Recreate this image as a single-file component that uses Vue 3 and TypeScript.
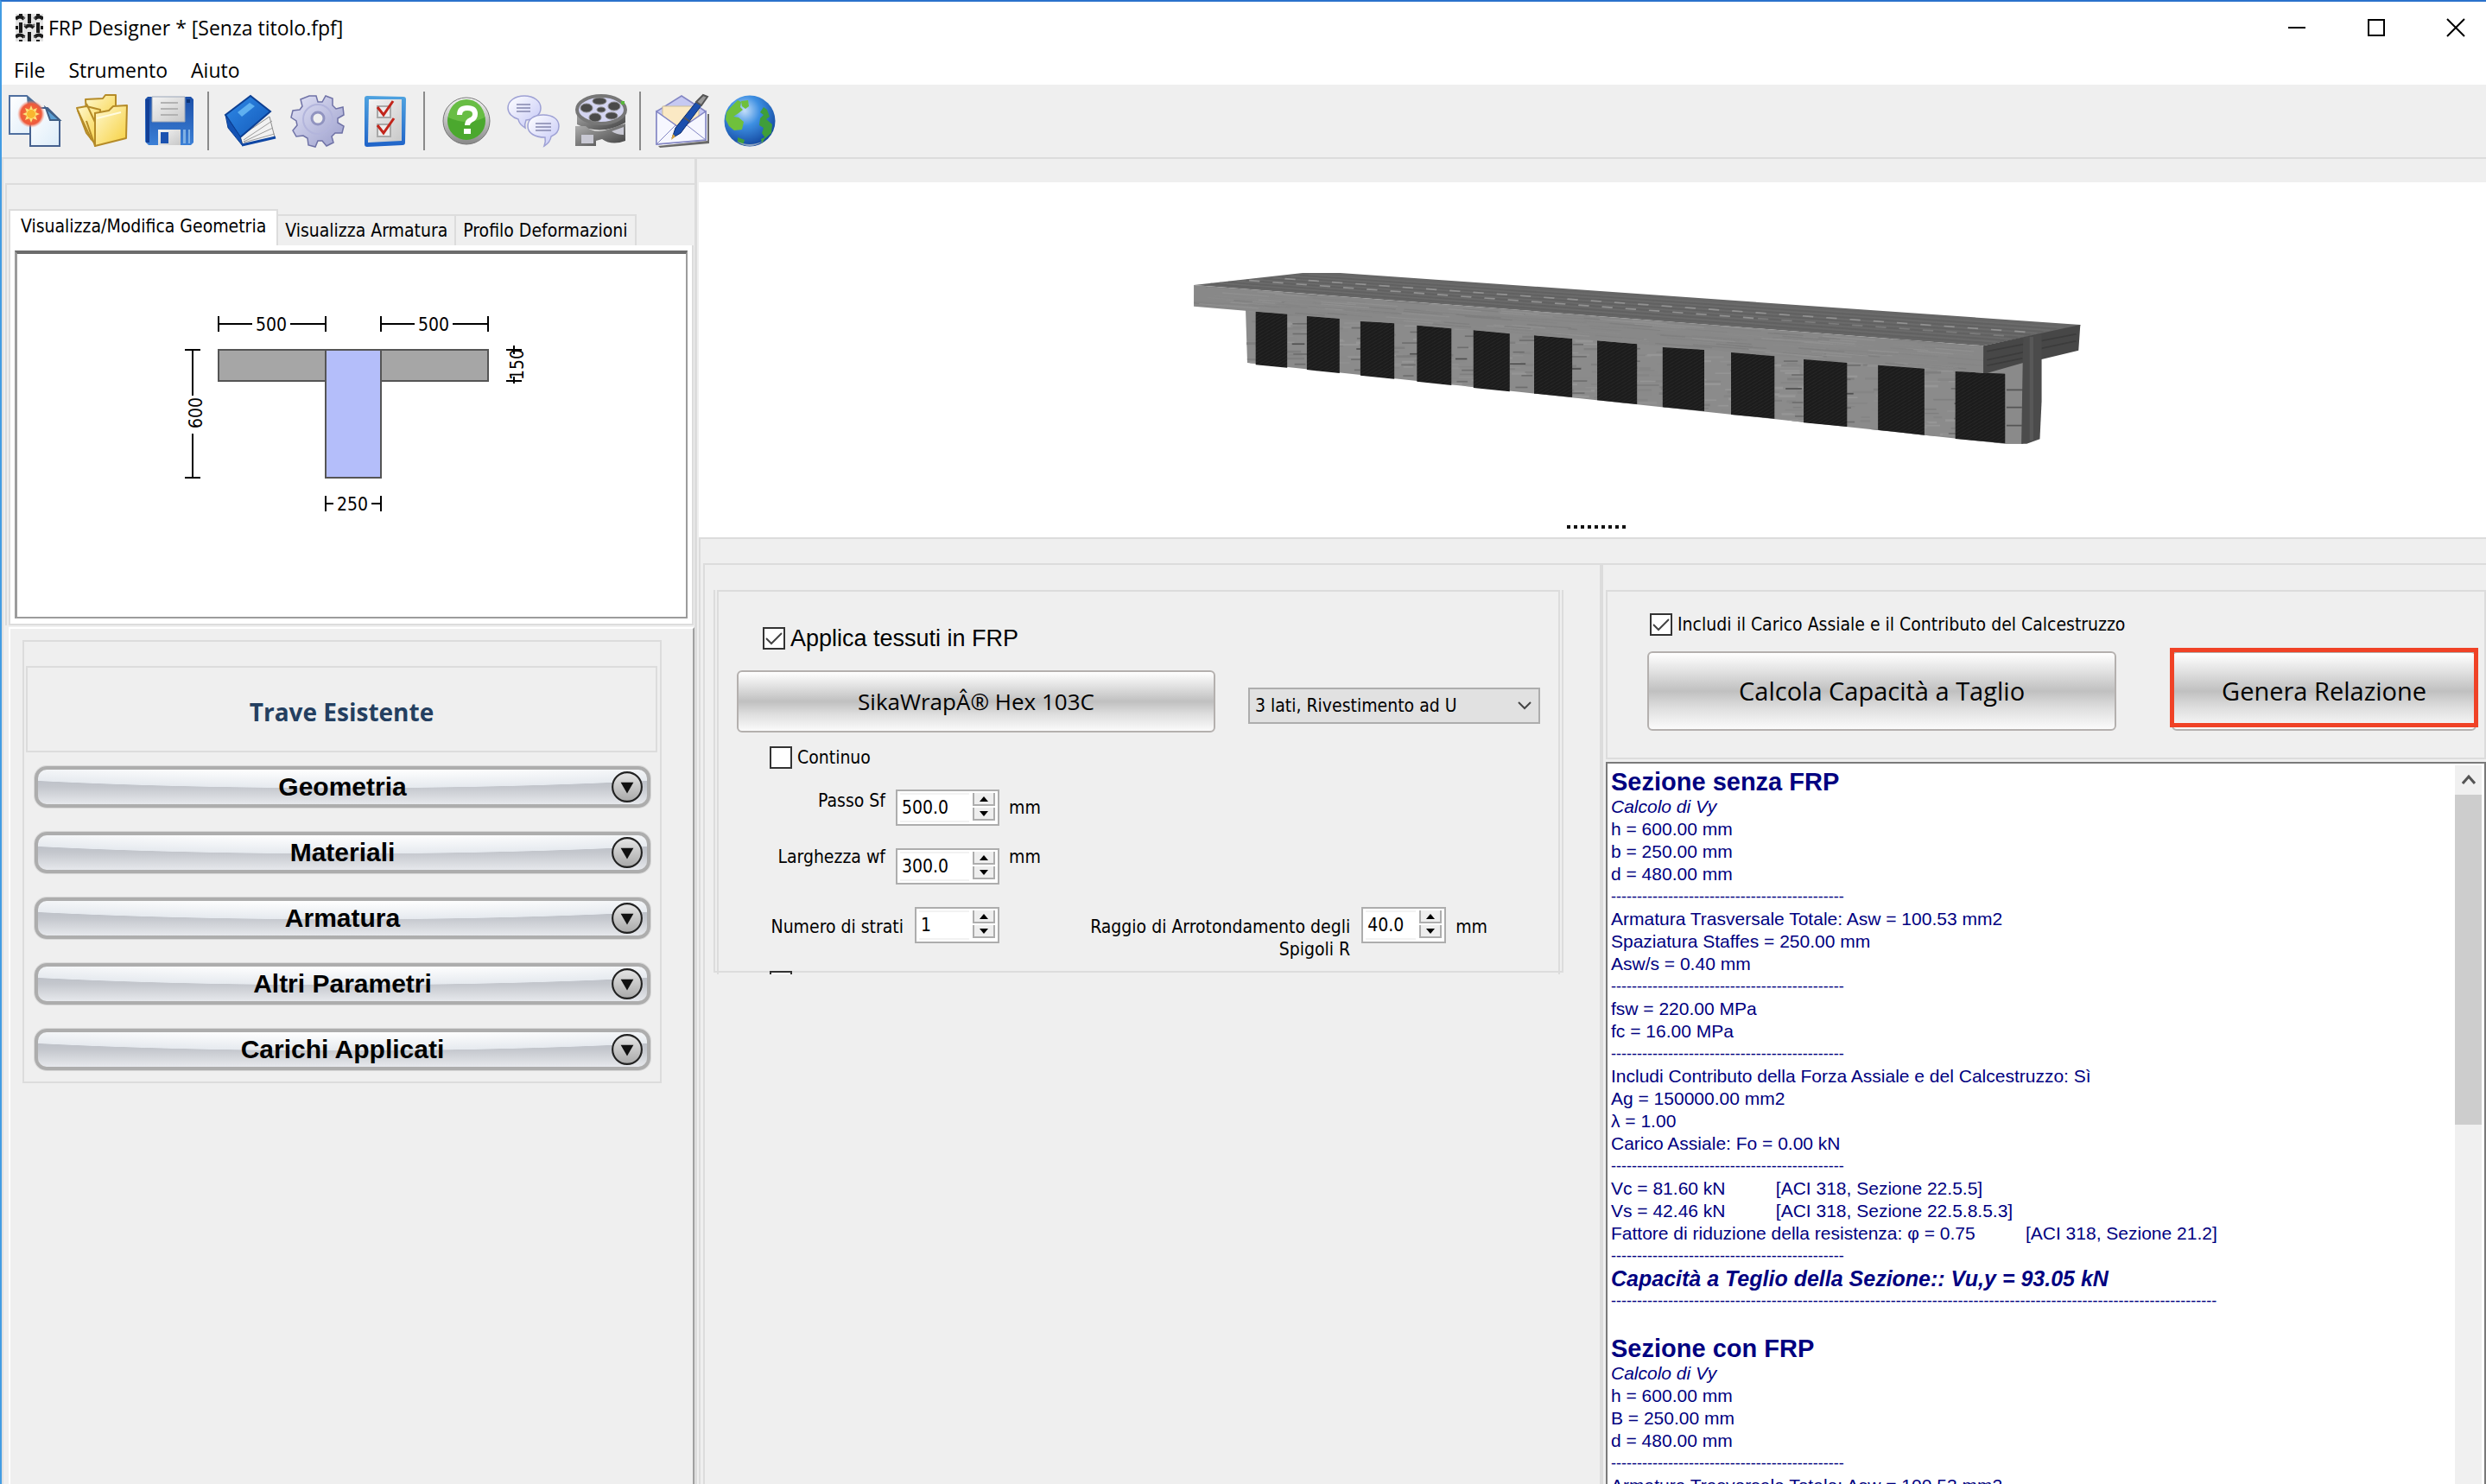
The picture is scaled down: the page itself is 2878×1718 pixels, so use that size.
<script setup lang="ts">
import { ref } from 'vue'

const menus = ['File', 'Strumento', 'Aiuto']
const tabs = ['Visualizza/Modifica Geometria', 'Visualizza Armatura', 'Profilo Deformazioni']
const activeTab = ref(0)
const sections = ['Geometria', 'Materiali', 'Armatura', 'Altri Parametri', 'Carichi Applicati']

const applyFabric = ref(true)
const continuous = ref(false)
const extra = ref(false)
const includeAxial = ref(true)
const wrap = ref('3 lati, Rivestimento ad U')
const spacing = ref('500.0')
const width = ref('300.0')
const layers = ref('1')
const radius = ref('40.0')

type Line = { kind: 'head' | 'ital' | 'text' | 'dash' | 'result'; text: string }
const short: Line = { kind: 'dash', text: '-'.repeat(45) }
const t = (text: string): Line => ({ kind: 'text', text })
const gap = ' '.repeat(10)
const report: Line[] = [
  { kind: 'head', text: 'Sezione senza FRP' },
  { kind: 'ital', text: 'Calcolo di Vy' },
  t('h = 600.00 mm'),
  t('b = 250.00 mm'),
  t('d = 480.00 mm'),
  short,
  t('Armatura Trasversale Totale: Asw = 100.53 mm2'),
  t('Spaziatura Staffes = 250.00 mm'),
  t('Asw/s = 0.40 mm'),
  short,
  t('fsw = 220.00 MPa'),
  t('fc = 16.00 MPa'),
  short,
  t('Includi Contributo della Forza Assiale e del Calcestruzzo: Sì'),
  t('Ag = 150000.00 mm2'),
  t('λ = 1.00'),
  t('Carico Assiale: Fo = 0.00 kN'),
  short,
  t('Vc = 81.60 kN' + gap + '[ACI 318, Sezione 22.5.5]'),
  t('Vs = 42.46 kN' + gap + '[ACI 318, Sezione 22.5.8.5.3]'),
  t('Fattore di riduzione della resistenza: φ = 0.75' + gap + '[ACI 318, Sezione 21.2]'),
  short,
  { kind: 'result', text: 'Capacità a Teglio della Sezione:: Vu,y = 93.05 kN' },
  { kind: 'dash', text: '-'.repeat(117) },
  t(' '),
  { kind: 'head', text: 'Sezione con FRP' },
  { kind: 'ital', text: 'Calcolo di Vy' },
  t('h = 600.00 mm'),
  t('B = 250.00 mm'),
  t('d = 480.00 mm'),
  short,
  t('Armatura Trasversale Totale: Asw = 100.53 mm2'),
]

// FRP strips wrapped round the web: left, right, top-left, top-right, bottom-left, bottom-right
const strips = [
  [136, 189, 212, 219, 397, 407],
  [222, 277, 228, 235, 414, 426],
  [312, 369, 246, 252, 434, 446],
  [407, 465, 260, 271, 455, 468],
  [502, 563, 277, 289, 477, 490],
  [604, 668, 295, 306, 497, 510],
  [710, 777, 313, 325, 520, 534],
  [820, 890, 336, 345, 544, 558],
  [935, 1008, 354, 367, 570, 584],
  [1057, 1130, 378, 390, 598, 612],
  [1182, 1260, 398, 410, 623, 641],
  [1312, 1396, 420, 428, 654, 670],
].map(([l, r, tl, tr, bl, br]) => `${l},${tl} ${r},${tr} ${r},${br} ${l},${bl}`)

// Grain of the concrete faces, from a small repeatable generator
let seed = 7
const rnd = () => {
  seed = (seed * 16807) % 2147483647
  return seed / 2147483647
}
const tone = ['#858585', '#909090', '#8a8a8a', '#7f7f7f', '#969696']
const webGrain = Array.from({ length: 420 }, () => {
  const x = 119 + rnd() * 1300
  const f = (x - 119) / 1307
  const y = 208 + f * 200 + rnd() * (182 + f * 90)
  return { x, y, w: 14 + rnd() * 26, h: 4 + rnd() * 5, c: tone[Math.floor(rnd() * 5)] }
})
const cracks = Array.from({ length: 70 }, (_, i) => {
  const x = 195 + Math.floor(i / 5) * 92
  const f = (x - 119) / 1307
  return { x: x + rnd() * 20, y: 240 + f * 205 + (i % 5) * (34 + f * 20), w: 16 + rnd() * 14, c: i % 5 === 2 ? '#505050' : '#6e6e6e' }
})
const faceGrain = Array.from({ length: 200 }, () => {
  const x = 20 + rnd() * 1290
  const f = (x - 32) / 1327
  const y = 122 + f * 211 + rnd() * (66 + f * 22)
  return { x, y, w: 30 + rnd() * 70, c: tone[Math.floor(rnd() * 4)] }
})
const topGrain = Array.from({ length: 12 }, (_, i) => ({
  x1: 60 + i * 15, y1: 116 - i * 3, x2: 1372 + i * 11, y2: 322 - i * 5, c: i % 2 ? '#6b6b6b' : '#616161',
}))
</script>

<template>
  <div class="window">
    <header class="titlebar">
      <svg class="logo" viewBox="0 0 32 32" aria-hidden="true">
        <rect width="32" height="32" fill="#e4e4e4" />
        <g stroke="#1a1a1a" stroke-width="4" fill="none">
          <path d="M0 6q5-5 10 0M22 6q5-5 10 0M11 16q5-5 10 0M0 27q5-5 10 0M22 27q5-5 10 0M0 16h3M29 16h3" />
          <path d="M16 0v11M16 21v11M6 10v12M26 10v12M6 0v2M26 0v2M6 30v2M26 30v2" />
        </g>
        <path d="M11 5h-2M21 5h2M11 27h-2M21 27h2M10 12l2 2M22 12l-2 2" stroke="#666" stroke-width="2" />
      </svg>
      <span class="title">FRP Designer * [Senza titolo.fpf]</span>
      <div class="controls">
        <button aria-label="Minimize"><svg viewBox="0 0 20 20"><path d="M0 10h20" /></svg></button>
        <button aria-label="Maximize"><svg viewBox="0 0 20 20"><path d="M1 1h18v18h-18z" /></svg></button>
        <button aria-label="Close"><svg viewBox="0 0 20 20"><path d="M0 0l20 20M20 0l-20 20" /></svg></button>
      </div>
    </header>

    <nav class="menu">
      <button v-for="m in menus" :key="m">{{ m }}</button>
    </nav>

    <svg class="defs" aria-hidden="true">
      <defs>
        <linearGradient id="gPage" x1="0" y1="0" x2="1" y2="1"><stop offset="0" stop-color="#fff" /><stop offset="1" stop-color="#dcecf9" /></linearGradient>
        <linearGradient id="gFold" x1="0" y1="0" x2="1" y2="1"><stop offset="0" stop-color="#fff9d0" /><stop offset="1" stop-color="#f6cf3c" /></linearGradient>
        <linearGradient id="gBlue" x1="0" y1="0" x2="0" y2="1"><stop offset="0" stop-color="#1c4fa8" /><stop offset="1" stop-color="#3c80d6" /></linearGradient>
        <linearGradient id="gSteel" x1="0" y1="0" x2="1" y2="1"><stop offset="0" stop-color="#f4f4f4" /><stop offset="1" stop-color="#c8c8c8" /></linearGradient>
        <linearGradient id="gBook" x1="0" y1="0" x2="1" y2="1"><stop offset="0" stop-color="#2f8ae8" /><stop offset="1" stop-color="#1358b8" /></linearGradient>
        <linearGradient id="gGear" x1="0" y1="0" x2="1" y2="1"><stop offset="0" stop-color="#e2e3f6" /><stop offset="1" stop-color="#9c9fcc" /></linearGradient>
        <linearGradient id="gRing" x1="0" y1="0" x2="0" y2="1"><stop offset="0" stop-color="#f6f6f6" /><stop offset="1" stop-color="#888" /></linearGradient>
        <linearGradient id="gTalk" x1="0" y1="0" x2="1" y2="1"><stop offset="0" stop-color="#fff" /><stop offset="1" stop-color="#c3c6f6" /></linearGradient>
        <linearGradient id="gFilm" x1="0" y1="0" x2="1" y2="1"><stop offset="0" stop-color="#b4b4b4" /><stop offset="1" stop-color="#3f3f3f" /></linearGradient>
        <linearGradient id="gFrame" x1="0" y1="0" x2="0" y2="1"><stop offset="0" stop-color="#4fa3e0" /><stop offset="1" stop-color="#1f63c8" /></linearGradient>
        <radialGradient id="gGlobe" cx=".4" cy=".3" r=".75"><stop offset="0" stop-color="#c4defa" /><stop offset=".4" stop-color="#3d8fe2" /><stop offset="1" stop-color="#0f4098" /></radialGradient>
        <radialGradient id="gBurst"><stop offset="0" stop-color="#f9a02e" /><stop offset=".55" stop-color="#f0603a" /><stop offset=".75" stop-color="#ef5a3c" /><stop offset="1" stop-color="#f6a08a" stop-opacity="0" /></radialGradient>
        <linearGradient id="gKnob" x1="0" y1="0" x2="0" y2="1"><stop offset="0" stop-color="#e6e6e6" /><stop offset="1" stop-color="#a8a8a8" /></linearGradient>
      </defs>
    </svg>

    <div class="toolbar" role="toolbar">
      <div class="group">
        <button aria-label="Nuovo">
          <svg viewBox="0 0 60 60">
            <path d="M1 1h20l17 15v29h-37z" fill="url(#gPage)" stroke="#4f6f9f" stroke-width="2" />
            <path d="M21 1l17 14-16-1z" fill="#4c6f94" />
            <path d="M25 15h20l14 14v30h-34z" fill="url(#gPage)" stroke="#46618f" stroke-width="2" />
            <path d="M43 15l16 14h-11z" fill="#5c9fd4" stroke="#3f5f85" stroke-width="2" />
            <circle cx="26" cy="22" r="16" fill="url(#gBurst)" />
            <path d="M26 12l2 5 5-2-2 5 5 2-5 2 2 5-5-2-2 5-2-5-5 2 2-5-5-2 5-2-2-5 5 2z" fill="#fde27a" />
            <circle cx="26" cy="22" r="5" fill="#f9b62f" />
          </svg>
        </button>
        <button aria-label="Apri">
          <svg viewBox="0 0 60 60" stroke="#b58b28" stroke-width="2" stroke-linejoin="round">
            <path d="M11 5l20-1 3-4h12v30l-33 8z" fill="url(#gFold)" />
            <path d="M1 15l11-2 16 4v40l-8-3-8-10z" fill="url(#gFold)" />
            <path d="M2 18l16 34M12 10l14 30" fill="none" />
            <path d="M22 21l16-3 5-5 16-1-1 38-36 9z" fill="url(#gFold)" />
            <path d="M24 27l28-7" fill="none" stroke="#fffbe0" />
            <path d="M12 30l10 29V20" fill="none" />
          </svg>
        </button>
        <button aria-label="Salva">
          <svg viewBox="0 0 60 60">
            <path d="M5 2h50l3 3v50l-3 3h-49l-4-4V5z" fill="url(#gBlue)" />
            <path d="M3 5h4v50h-4z" fill="#123f96" />
            <path d="M10 2h38v29h-38z" fill="url(#gSteel)" stroke="#9aa6b8" />
            <path d="M20 9h20M20 16h20M20 23h20" stroke="#b2b2b2" stroke-width="2" />
            <path d="M17 40h26v18h-26z" fill="url(#gSteel)" />
            <path d="M20 43h9v13h-9z" fill="#1b52b0" />
            <path d="M50 5h4v4h-4z" fill="#0c3477" />
            <path d="M46 40h3v16h-3zM52 40h2v16h-2z" fill="#7fb0e4" />
          </svg>
        </button>
      </div>
      <span class="sep"></span>
      <div class="group">
        <button aria-label="Libreria">
          <svg viewBox="0 0 60 60">
            <path d="M18 48l34-23 6 24-37 8z" fill="#f2f2f2" stroke="#8a8a8a" />
            <path d="M22 52l33-22M22 54l34-16M22 55l36-10" stroke="#9c9c9c" />
            <path d="M1 23L30 1l23 18-35 30z" fill="url(#gBook)" stroke="#0d3f92" stroke-width="2" />
            <path d="M1 23l17 25 3 11L4 38z" fill="#1453b4" stroke="#0d3f92" />
            <path d="M15 20l14-11 6 4-15 12z" fill="#5fb0f0" />
            <path d="M20 58l39-9" stroke="#0f47a4" stroke-width="3" />
          </svg>
        </button>
        <button aria-label="Impostazioni">
          <svg viewBox="0 0 60 60">
            <path fill="url(#gGear)" stroke="#6f72a6" stroke-width="1.5" d="M20 2l8 0 2 7 5 0 4-7 8 3 0 8 4 4 8-2 1 9-7 4 0 5 7 4-2 8-8 0-4 4 2 7-8 4-5-6-5 0-3 7-8-2-1-8-5-3-8 1-4-7 5-6-1-5-6-4 2-8 8-1 3-4-2-8z" transform="translate(0 -1)" />
            <circle cx="30" cy="28" r="17" fill="none" stroke="#b3b5dc" stroke-width="2" />
            <circle cx="30" cy="27" r="7" fill="#efefef" stroke="#9194c0" stroke-width="3" />
          </svg>
        </button>
        <button aria-label="Verifiche">
          <svg viewBox="0 0 60 60">
            <path d="M9 1l42 1q3 0 3 3l-1 50q0 3-3 3l-41 2q-3 0-3-3V4q0-3 3-3z" fill="url(#gFrame)" />
            <path d="M11 5h38v48l-39 2z" fill="url(#gSteel)" />
            <path d="M21 13h15v13h-15zM21 34h15v14h-15z" fill="#ececec" stroke="#a8a8a8" stroke-width="2" />
            <path d="M21 14l7 9 11-16M21 35l7 9 12-17" fill="none" stroke="#c2241a" stroke-width="3" />
          </svg>
        </button>
      </div>
      <span class="sep"></span>
      <div class="group">
        <button aria-label="Guida">
          <svg viewBox="0 0 60 60">
            <circle cx="30" cy="30" r="27" fill="url(#gRing)" stroke="#777" />
            <circle cx="30" cy="30" r="22" fill="#4ba82e" />
            <path d="M9 26a21 21 0 0 1 42 0q-20 10-42 0z" fill="#68bd44" />
            <path d="M22 23q0-8 9-8 9 0 9 7 0 5-5 7-4 2-4 6" fill="none" stroke="#fff" stroke-width="6" />
            <path d="M27 39h8v6h-8z" fill="#fff" />
          </svg>
        </button>
        <button aria-label="Forum">
          <svg viewBox="0 0 60 60" fill="url(#gTalk)" stroke="#9ea1d4" stroke-width="1.5">
            <path d="M19 1c11 0 19 6 19 14s-7 13-17 14q-2 5-1 9-7-4-8-10C5 26 0 21 0 15 0 7 8 1 19 1z" />
            <path d="M41 23c11 0 18 5 18 13 0 6-4 10-9 12q-1 7-8 11 2-5 1-10c-12 0-20-5-20-13s7-13 18-13z" />
            <path d="M10 11h16M10 15h16M10 19h16M32 33h18M32 37h18M32 41h18" fill="none" stroke="#8487ad" stroke-width="1.5" />
          </svg>
        </button>
        <button aria-label="Filmati">
          <svg viewBox="0 0 60 60">
            <path d="M2 20v14q28 14 56-2V14z" fill="url(#gFilm)" />
            <path d="M0 36h12q8 8 22 5l24-8v20q-16 6-27-2l-7 2v6H0z" fill="url(#gFilm)" />
            <path d="M7 46h14v10H7zM42 42l14-5v9q-8 0-14-4z" fill="#c9c9d4" />
            <ellipse cx="30" cy="17" rx="28" ry="16" fill="#d4d5f2" stroke="#777" stroke-width="4" />
            <g fill="#4a4a4a" stroke="#888"><ellipse cx="28" cy="7" rx="8" ry="4" /><ellipse cx="13" cy="15" rx="7" ry="5" /><ellipse cx="45" cy="13" rx="7" ry="5" /><ellipse cx="23" cy="26" rx="7" ry="5" /><ellipse cx="42" cy="24" rx="7" ry="4" /><ellipse cx="30" cy="17" rx="5" ry="3" /></g>
            <path d="M53 7h4v4h-4z" fill="#58b83c" />
          </svg>
        </button>
      </div>
      <span class="sep"></span>
      <div class="group">
        <button aria-label="Contatti">
          <svg viewBox="0 0 60 60">
            <path d="M2 59l57-6V22h2v34L4 61z" fill="#6a6a6a" />
            <path d="M0 19L29 1l28 18v33L0 57z" fill="#c6c9f2" stroke="#8386c4" stroke-width="1.5" />
            <path d="M7 13h42v26H7z" fill="#fbe9c4" stroke="#cbbd98" />
            <path d="M0 19l24 17h8l25-17v33L0 57z" fill="#f6f7ff" stroke="#8386c4" stroke-width="1.5" />
            <path d="M0 57l22-22M57 52L34 34" fill="none" stroke="#8386c4" />
            <path d="M18 50l4-12L46 8l6 4-24 32z" fill="#1b4fae" stroke="#0e2c6a" />
            <path d="M32 26l7 5M46 8l8-8 5 2-7 10z" fill="#999" stroke="#555" stroke-width="2" />
            <path d="M17 52l2-7 3 3z" fill="#d9a640" />
          </svg>
        </button>
        <button aria-label="Sito web">
          <svg viewBox="0 0 60 60">
            <circle cx="30" cy="30" r="29.5" fill="url(#gGlobe)" />
            <g fill="#6fc03c">
              <path d="M8 14l8-8 4 2-1 6 3 3-5 4-6 4 6 1 6 5-2 9-9 1-6-5-4-8 1-8z" />
              <path d="M20 7l8-1 1 7-4 3-4-3z" />
              <path d="M46 14l4 3 3 8-4 3 7 6-1 10-7 6-4-6 2-6-5-3 1-8 4-4-4-3z" fill="#3f9e3a" />
              <path d="M16 49l8 3-2 6-6-4zM43 51l6-3-5 8z" fill="#3f9e3a" />
            </g>
            <path d="M14 53q16 8 32 0-16 12-32 0z" fill="#8fa4bf" />
          </svg>
        </button>
      </div>
    </div>

    <main class="body">
      <aside class="left">
        <div class="geometry">
          <div class="tabs" role="tablist">
            <button v-for="(tab, i) in tabs" :key="tab" role="tab" :aria-selected="activeTab === i" :class="{ active: activeTab === i }" @click="activeTab = i">{{ tab }}</button>
          </div>
          <div class="tabpane">
            <div class="canvas">
              <svg viewBox="0 2 774 420">
                <g stroke="#555" stroke-width="2">
                  <path d="M233 113h124v36h-124zM421 113h124v36h-124z" fill="#a6a6a6" />
                  <path d="M357 113h64v148h-64z" fill="#b4befa" />
                </g>
                <g stroke="#000" stroke-width="2" fill="none">
                  <path d="M233 74v18M357 74v18M233 83h39M316 83h41M421 74v18M545 74v18M421 83h39M504 83h41" />
                  <path d="M194 113h18M194 261h18M203 113v53M203 210v51" />
                  <path d="M566 113h18M566 149h18M575 108v10M575 144v8" />
                  <path d="M357 282v18M421 282v18M357 291h9M410 291h11" />
                </g>
                <g class="dims" text-anchor="middle">
                  <text x="294" y="91">500</text>
                  <text x="482" y="91">500</text>
                  <text x="388" y="299">250</text>
                  <text transform="translate(214 186) rotate(-90)">600</text>
                  <text transform="translate(586 130) rotate(-90)">150</text>
                </g>
              </svg>
            </div>
          </div>
        </div>
        <div class="params">
          <div class="groupbox">
            <h2>Trave Esistente</h2>
            <div class="accordion">
              <button v-for="s in sections" :key="s">
                <span>{{ s }}</span>
                <svg viewBox="0 0 36 36" aria-hidden="true">
                  <circle cx="18" cy="18" r="16" fill="url(#gKnob)" stroke="#222" stroke-width="2" />
                  <path d="M11 13h14l-7 12z" fill="#111" />
                </svg>
              </button>
            </div>
          </div>
        </div>
      </aside>

      <section class="right">
        <div class="view3d">
          <svg viewBox="0 0 2069 411" preserveAspectRatio="xMidYMin meet">
            <defs>
              <clipPath id="cWeb"><path d="M119 208L1426 390V671H1395L122 390z" /></clipPath>
              <clipPath id="cFace"><path d="M32 120L1359 331V426L32 194z" /></clipPath>
              <pattern id="weave" width="10" height="12" patternUnits="userSpaceOnUse"><rect width="10" height="12" fill="#1c1c1c" /><path d="M0 12L10 0" stroke="#272727" stroke-width="2" /></pattern>
            </defs>
            <svg x="551" y="79" width="1080" height="340" viewBox="0 0 1568 1020" preserveAspectRatio="none">
              <path d="M119 200L1426 380V671H1395L122 390z" fill="#8b8b8b" />
              <g clip-path="url(#cWeb)">
                <rect v-for="(g, i) in webGrain" :key="'w' + i" :x="g.x" :y="g.y" :width="g.w" :height="g.h" :fill="g.c" />
                <rect v-for="(g, i) in cracks" :key="'c' + i" :x="g.x" :y="g.y" :width="g.w" height="5" :fill="g.c" />
              </g>
              <polygon v-for="p in strips" :key="p" :points="p" fill="url(#weave)" />
              <path d="M1396 405L1426 390V671H1396z" fill="#8a8a8a" />
              <path d="M1398 484h28M1398 545h26M1398 608h26" stroke="#555" stroke-width="5" />
              <path d="M32 120L215 78H278L1522 258V262L1359 331z" fill="#666" />
              <path v-for="g in topGrain" :key="g.x1" :d="`M${g.x1} ${g.y1}L${g.x2} ${g.y2}`" :stroke="g.c" stroke-width="5" />
              <g stroke="#929292" stroke-width="5" stroke-dasharray="18 22">
                <path d="M125 104L980 236" /><path d="M185 98L1450 286" /><path d="M980 236L1400 297" stroke="#7c7c7c" />
              </g>
              <path d="M32 120L1359 331V426L32 194z" fill="#888" />
              <g clip-path="url(#cFace)">
                <path v-for="(g, i) in faceGrain" :key="'f' + i" :d="`M${g.x} ${g.y}l${g.w} ${g.w * 0.16}`" :stroke="g.c" stroke-width="4" />
              </g>
              <path d="M1359 331L1522 258L1519 347L1457 378L1426 390L1365 426H1359z" fill="#474747" />
              <path d="M1365 350l150-60M1365 380l150-66M1365 400l60-26" stroke="#3c3c3c" stroke-width="5" />
              <path d="M1426 302L1457 290V525L1454 655L1432 671H1423z" fill="#4b4b4b" />
              <path d="M1440 300v360" stroke="#585858" stroke-width="6" />
            </svg>
          </svg>
          <div class="grip"><i v-for="n in 9" :key="n"></i></div>
        </div>

        <div class="lower">
          <div class="panes">
            <div class="frp">
              <div class="frame">
                <form class="inner" @submit.prevent>
                  <label class="check big"><input v-model="applyFabric" type="checkbox" />Applica tessuti in FRP</label>
                  <div class="fabric">
                    <button type="button" class="steel product">SikaWrapÂ® Hex 103C</button>
                    <div class="combo">
                      <select v-model="wrap" aria-label="Rivestimento"><option>3 lati, Rivestimento ad U</option></select>
                      <svg viewBox="0 0 16 10" aria-hidden="true"><path d="M1 1l7 7 7-7" fill="none" stroke="#444" stroke-width="2" /></svg>
                    </div>
                  </div>
                  <label class="check cont"><input v-model="continuous" type="checkbox" />Continuo</label>
                  <div class="row first">
                    <label class="name" for="sf">Passo Sf</label>
                    <span class="spin"><input id="sf" v-model="spacing" /><span><button type="button" aria-label="Aumenta"><b class="up"></b></button><button type="button" aria-label="Riduci"><b class="down"></b></button></span></span>
                    <span class="unit mid">mm</span>
                  </div>
                  <div class="row second">
                    <label class="name" for="wf">Larghezza wf</label>
                    <span class="spin"><input id="wf" v-model="width" /><span><button type="button" aria-label="Aumenta"><b class="up"></b></button><button type="button" aria-label="Riduci"><b class="down"></b></button></span></span>
                    <span class="unit">mm</span>
                  </div>
                  <div class="row third">
                    <label class="name wide" for="ns">Numero di strati</label>
                    <span class="spin small"><input id="ns" v-model="layers" /><span><button type="button" aria-label="Aumenta"><b class="up"></b></button><button type="button" aria-label="Riduci"><b class="down"></b></button></span></span>
                    <label class="name radius" for="rr">Raggio di Arrotondamento degli Spigoli R</label>
                    <span class="spin small"><input id="rr" v-model="radius" /><span><button type="button" aria-label="Aumenta"><b class="up"></b></button><button type="button" aria-label="Riduci"><b class="down"></b></button></span></span>
                    <span class="unit">mm</span>
                  </div>
                  <div class="check cut"><input v-model="extra" type="checkbox" aria-label="Opzione" /></div>
                </form>
              </div>
            </div>

            <div class="results">
              <div class="actions">
                <label class="check"><input v-model="includeAxial" type="checkbox" />Includi il Carico Assiale e il Contributo del Calcestruzzo</label>
                <div class="buttons">
                  <button class="steel calc">Calcola Capacità a Taglio</button>
                  <button class="steel report">Genera Relazione</button>
                </div>
              </div>
              <div class="output">
                <div class="lines">
                  <p v-for="(l, i) in report" :key="i" :class="l.kind">{{ l.text }}</p>
                </div>
                <div class="scroll">
                  <button aria-label="Scorri su"><svg viewBox="0 0 16 16"><path d="M1 12l7-8 7 8" /></svg></button>
                  <div class="thumb"></div>
                </div>
              </div>
            </div>
          </div>
        </div>
      </section>
    </main>
  </div>
</template>

<style>
html, body { margin: 0; height: 100%; overflow: hidden; }
#app { height: 100%; }
</style>

<style scoped>
* { box-sizing: border-box; }
button, input, select { font: inherit; color: inherit; margin: 0; padding: 0; }
button { border: 0; background: none; }
svg { display: block; }
p, h2 { margin: 0; }

.window {
  display: flex;
  flex-direction: column;
  height: 100vh;
  overflow: hidden;
  background: #efefef;
  color: #000;
  border-top: 2px solid #2a72cc;
  border-left: 2px solid #429ce3;
  font: 21px/26px "DejaVu Sans Condensed", "Liberation Sans", sans-serif;
}
.defs { position: absolute; width: 0; height: 0; }

.titlebar { flex: none; height: 60px; display: flex; align-items: center; background: #fff; padding: 0 25px 0 16px; font: 23px/32px "Open Sans", "Noto Sans", sans-serif; }
.logo { width: 32px; height: 32px; margin-right: 6px; }
.controls { margin-left: auto; display: flex; gap: 72px; }
.controls svg { width: 20px; height: 20px; overflow: visible; fill: none; stroke: #000; stroke-width: 2; }
.menu { flex: none; height: 36px; display: flex; align-items: center; gap: 27px; padding: 2px 14px 0; background: #fff; font: 23px/32px "Open Sans", "Noto Sans", sans-serif; }

.toolbar { flex: none; height: 86px; display: flex; align-items: center; padding-left: 8px; border-bottom: 2px solid #dcdcdc; }
.toolbar .group { display: flex; gap: 18px; }
.toolbar svg { width: 60px; height: 60px; overflow: visible; }
.sep { width: 2px; height: 68px; margin: 0 18px 0 14px; background: #8a8a8a; }

.body { flex: 1; min-height: 0; display: grid; grid-template: 1fr / 802fr 2074fr; }
.left { min-width: 0; display: flex; flex-direction: column; padding-left: 2px; border-left: 2px solid #e0e0e0; }
.geometry { flex: none; margin-top: 28px; padding: 28px 1px 0 2px; border: 2px solid #dcdcdc; border-bottom: 0; border-right: 0; }
.tabs { display: flex; align-items: flex-end; height: 42px; }
.tabs button { height: 36px; padding: 0 8px; border: 2px solid #dcdcdc; border-left: 0; border-bottom: 0; white-space: nowrap; }
.tabs button.active { height: 42px; padding: 0 12px 4px; border-left: 2px solid #dcdcdc; background: #fff; }
.tabpane { padding: 6px 5px; background: #fff; border: 2px solid #dcdcdc; border-top: 0; }
.canvas { border: 2px solid #9c9c9c; border-top: 4px solid #6c6c6c; border-left-width: 3px; }
.canvas svg { width: 100%; }
.dims { font-size: 21px; }

.params { flex: 1; min-height: 0; margin: 2px 0 0 4px; padding: 13px 36px 0 14px; border: 2px solid #fff; border-right-color: #a0a0a0; border-bottom: 0; }
.groupbox { border: 2px solid #dcdcdc; padding: 28px 3px 13px 2px; }
h2 { height: 100px; border: 2px solid #dcdcdc; display: flex; align-items: center; justify-content: center; padding-top: 6px; font: bold 28px/38px "Open Sans", "Noto Sans", sans-serif; color: #243f60; }
.accordion { display: flex; flex-direction: column; gap: 28px; padding: 16px 8px 0 10px; }
.accordion button {
  height: 48px;
  display: flex;
  align-items: center;
  padding: 0 4px 0 42px;
  border: 4px solid #adadad;
  border-radius: 14px;
  box-shadow: 0 0 0 1px #d8d8d8;
  font: bold 30px/36px "Liberation Sans", Arial, sans-serif;
  background: radial-gradient(ellipse 100% 154% at 50% -100%, #fff 65%, #e6eaef 99%, transparent 100%), linear-gradient(#b2b7c0, #c4c7cd 50%, #e6e8ec) padding-box;
}
.accordion span { flex: 1; }
.accordion svg { width: 38px; height: 38px; }

.right { min-width: 0; display: flex; flex-direction: column; border-left: 3px solid #dcdcdc; padding: 27px 0 0 2px; }
.view3d { position: relative; flex: none; height: 411px; background: #fff; }
.view3d > svg { width: 100%; height: 411px; }
.grip { position: absolute; left: 9px; right: 0; bottom: 10px; display: flex; justify-content: center; gap: 4px; }
.grip i { width: 4px; height: 4px; background: #111; }

.lower { flex: 1; min-height: 0; display: flex; flex-direction: column; border: 2px solid #dcdcdc; border-right: 0; border-bottom: 0; padding: 28px 0 0 3px; }
.panes { flex: 1; min-height: 0; display: grid; grid-template: 1fr / 1038fr 1026fr; border-top: 2px solid #dcdcdc; }
.frp { min-width: 0; border-left: 2px solid #dcdcdc; padding: 29px 42px 0 10px; }
.frame { height: 443px; border: 2px solid #dcdcdc; border-top: 0; padding: 0 2px; }
.inner { height: 445px; overflow: hidden; border: 2px solid #dcdcdc; border-bottom: 0; padding-top: 41px; }

.check { display: flex; align-items: center; height: 26px; gap: 6px; white-space: nowrap; }
.check input { appearance: none; width: 26px; height: 26px; border: 2px solid #333; background: #fff; }
.check input:checked { background: #fff url("data:image/svg+xml,%3Csvg xmlns='http://www.w3.org/2000/svg' viewBox='0 0 22 22'%3E%3Cpath d='M2 11l6 6L20 5' fill='none' stroke='%23444' stroke-width='2'/%3E%3C/svg%3E"); }
.check.big { margin-left: 51px; font: 27px/30px "Liberation Sans", Arial, sans-serif; }
.check.cont { margin: 16px 0 0 59px; }
.check.cut { margin: 12px 0 0 59px; }

.steel { border: 2px solid #b4b0ae; border-radius: 6px; background: linear-gradient(#fff, #e4e4e4 22%, #c0c0c0 50%, #dedede 72%, #fbfbfb); font-family: "Open Sans", "Noto Sans", sans-serif; white-space: nowrap; }
.fabric { display: flex; align-items: flex-end; gap: 38px; margin: 24px 21px 0; }
.product { flex: 1; height: 72px; font-size: 26px; }
.combo { position: relative; flex: none; width: 338px; margin-bottom: 10px; }
.combo select { appearance: none; width: 100%; height: 42px; padding: 0 6px; border: 2px solid #adadad; border-radius: 0; background: #e1e1e1; }
.combo svg { position: absolute; right: 10px; top: 16px; width: 16px; height: 10px; }

.row { display: flex; align-items: flex-start; }
.row.first { margin-top: 24px; }
.row.second { margin-top: 23px; }
.row.second .spin { margin-top: 3px; }
.row.third { margin-top: 26px; }
.row.third .name, .row.third .unit { margin-top: 10px; }
.name { width: 193px; margin-right: 12px; text-align: right; white-space: nowrap; }
.name.wide { width: 214px; margin-right: 13px; }
.name.radius { width: 320px; margin-left: auto; margin-right: 13px; white-space: normal; }
.row.third .unit:last-child { margin-right: 82px; }
.unit { margin-left: 11px; }
.unit.mid { align-self: center; }
.spin { width: 120px; height: 42px; display: flex; padding: 2px 3px; border: 2px solid #adadad; background: #fff; }
.spin.small { width: 98px; }
.spin input { flex: 1; min-width: 0; border: 2px solid #f2f2f2; border-width: 2px 0; padding-left: 2px; background: #fff; outline: 0; }
.spin > span { display: flex; flex-direction: column; gap: 2px; margin-left: 4px; padding-bottom: 2px; }
.spin button { width: 26px; flex: 1; display: flex; align-items: center; justify-content: center; background: #eee; border: 2px solid #adadad; border-top-width: 0; }
.up, .down { border: 5px solid transparent; border-top-width: 0; border-bottom: 6px solid #000; }
.down { border-bottom-width: 0; border-top: 6px solid #000; }

.results { min-width: 0; display: flex; flex-direction: column; border-left: 4px solid #dcdcdc; padding: 29px 0 0 3px; }
.actions { flex: none; height: 196px; border: 2px solid #dcdcdc; padding: 25px 9px 0 46px; }
.actions .check { margin-left: 3px; }
.buttons { display: flex; gap: 64px; margin-top: 18px; }
.buttons .steel { height: 92px; font-size: 29px; }
.calc { flex: 544; }
.report { flex: 352; position: relative; }
.buttons .report::after { content: ""; position: absolute; inset: -6px -4px 2px; border: 5px solid #f04226; }

.output { flex: 1; min-height: 0; margin-top: 3px; display: flex; overflow: hidden; background: #fff; border: 2px solid #7a7a7a; border-bottom: 0; }
.lines { flex: 1; min-width: 0; padding: 5px 0 0 4px; color: #000080; font: 21px/26px "Liberation Sans", Arial, sans-serif; white-space: pre; overflow: hidden; }
.lines p { height: 26px; }
.lines .head { height: 32px; font-size: 29px; line-height: 32px; font-weight: bold; }
.lines .ital { font-style: italic; }
.lines .dash { font-size: 18px; }
.lines .result { font-size: 25px; font-weight: bold; font-style: italic; }
.scroll { flex: none; width: 34px; padding: 2px 3px 0 0; background: #f0f0f0 content-box; }
.scroll button { width: 100%; height: 34px; display: flex; align-items: center; justify-content: center; }
.scroll svg { width: 16px; height: 16px; fill: none; stroke: #555; stroke-width: 3; }
.thumb { height: 382px; background: #cdcdcd; }
</style>
